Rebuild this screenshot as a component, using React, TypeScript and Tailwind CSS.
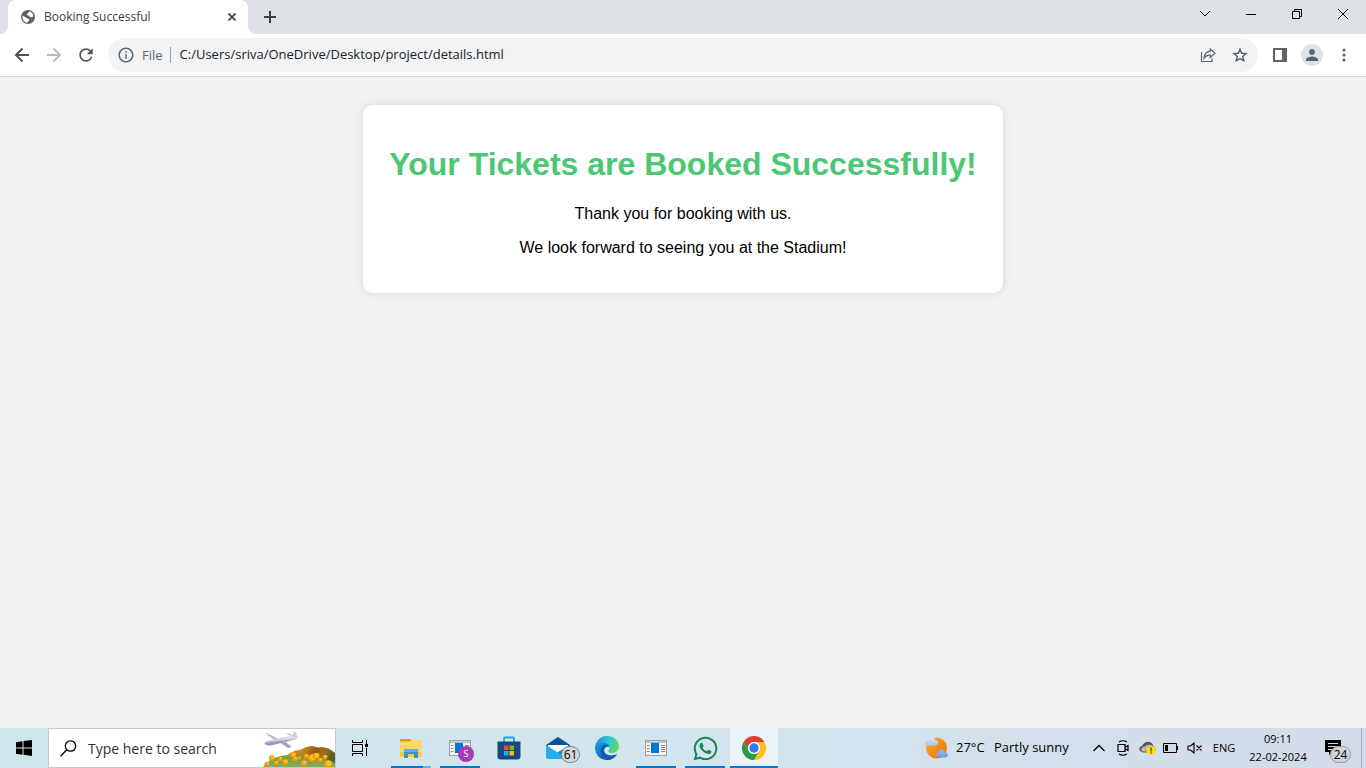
import React from "react";
import { FaWhatsapp } from "react-icons/fa";
import { MdInfoOutline, MdPerson, MdRefresh } from "react-icons/md";

type SlotProps = {
  label: string;
  children: React.ReactNode;
  running?: boolean;
  active?: boolean;
  grouped?: boolean;
};

function GlobeIcon() {
  return (
    <svg viewBox="0 0 14 14" className="size-3.5" aria-hidden="true">
      <circle cx="7" cy="7" r="7" fill="#5f6368" />
      <path fill="#fff" d="M8.500 1.600c-1 .3-1.300 1-1 1.700-1 0-2 .5-1.700 1.400.2.800 1.400.6 2 .9.800.4.500 1.200 1.300 1.500 1 .4 1.800-.7 3.300-.4a5.600 5.600 0 0 0-3.900-5.100zM1.500 6c-.5 3 1.200 5.700 3.800 6.500l1.500.2c-.5-1 .2-1.500 1-2 .7-.5.4-1.500-.3-1.900-.8-.4-1.700-.1-2.300-.8C4.500 7.200 3.300 6 1.500 6z" />
    </svg>
  );
}

function TabStrip() {
  return (
    <header className="flex h-[34px] items-stretch bg-[#dee1e6] text-[#3c4043]">
      <div className="flex w-2 bg-white">
        <span className="w-full rounded-br-lg bg-[#dee1e6]" />
      </div>
      <div className="flex w-60 items-center rounded-t-lg bg-white pr-2 pl-[13px]">
        <GlobeIcon />
        <span className="ml-[9px] flex-1 text-[12px] whitespace-nowrap">Booking Successful</span>
        <button aria-label="Close tab" className="flex size-4 items-center justify-center">
          <svg viewBox="0 0 8 8" className="size-2" stroke="#3c4043" strokeWidth="1.700">
            <path d="M.5 .5l7 7M7.500 .5l-7 7" />
          </svg>
        </button>
      </div>
      <div className="flex w-2 bg-white">
        <span className="w-full rounded-bl-lg bg-[#dee1e6]" />
      </div>
      <button aria-label="New tab" className="flex w-7 items-center justify-center">
        <svg viewBox="0 0 12 12" className="size-3" stroke="#3c4043" strokeWidth="2">
          <path d="M6 0v12M0 6h12" />
        </svg>
      </button>
      <div className="ml-auto flex h-7 text-black">
        <button aria-label="Search tabs" className="flex w-[46px] items-center justify-center">
          <svg viewBox="0 0 12 8" className="h-2 w-3" fill="none" stroke="currentColor">
            <path d="M1 1l5 5 5-5" />
          </svg>
        </button>
        <button aria-label="Minimize" className="flex w-[46px] items-center justify-center">
          <svg viewBox="0 0 10 10" className="size-2.5" stroke="currentColor">
            <path d="M0 5.500h10" />
          </svg>
        </button>
        <button aria-label="Restore" className="flex w-[46px] items-center justify-center">
          <svg viewBox="0 0 10 10" className="size-2.5" fill="none" stroke="currentColor">
            <path d="M.5 2.500h7v7h-7zM2.500 2.500v-2h7v7h-2" />
          </svg>
        </button>
        <button aria-label="Close window" className="flex w-[46px] items-center justify-center">
          <svg viewBox="0 0 10 10" className="size-2.5" stroke="currentColor">
            <path d="M0 0l10 10M10 0L0 10" />
          </svg>
        </button>
      </div>
    </header>
  );
}

function Toolbar() {
  return (
    <div className="flex h-[43px] items-center border-b border-[#d5d7da] bg-white pr-1.5 pl-1.5 text-[#5f6368]">
      <button aria-label="Back" className="flex w-8 justify-center">
        <svg viewBox="0 0 16 16" className="size-4" fill="none" stroke="#4f5357" strokeWidth="2">
          <path d="M15 8H2.500M8.500 1.500L2 8l6.500 6.500" />
        </svg>
      </button>
      <button aria-label="Forward" className="flex w-8 justify-center">
        <svg viewBox="0 0 16 16" className="size-4" fill="none" stroke="#babcbe" strokeWidth="2">
          <path d="M1 8h12.500M7.500 1.500L14 8l-6.500 6.500" />
        </svg>
      </button>
      <button aria-label="Reload" className="flex w-8 justify-center text-[#4f5357]">
        <MdRefresh className="size-5" />
      </button>
      <div className="ml-1.5 flex h-[34px] flex-1 items-center rounded-full bg-[#f1f3f4] pr-2.5 pl-[9px] text-[13px]">
        <MdInfoOutline className="size-[18px] shrink-0" />
        <span className="ml-[7px] border-r border-[#9aa0a6] pr-[7px] leading-4">File</span>
        <input
          aria-label="Address"
          defaultValue="C:/Users/sriva/OneDrive/Desktop/project/details.html"
          className="ml-[9px] min-w-0 flex-1 bg-transparent text-[#202124] outline-none"
        />
        <button aria-label="Share" className="mr-4">
          <svg viewBox="0 0 16 16" className="size-4" fill="none" stroke="currentColor" strokeWidth="1.200">
            <path d="M1.500 5v9.500h10.500V11.500M10.300 2L15 6.200l-4.700 4.200V8.200C7.500 8 5.500 9 4 11.200 4.300 7.500 6.500 4.700 10.300 4.200z" />
          </svg>
        </button>
        <button aria-label="Bookmark this page">
          <svg viewBox="0 0 16 16" className="size-4" fill="none" stroke="currentColor" strokeWidth="1.500">
            <path d="M8 2.300l1.700 4 4.300.4-3.300 2.800 1 4.200L8 11.500l-3.700 2.200 1-4.200L2 6.700l4.300-.4z" />
          </svg>
        </button>
      </div>
      <button aria-label="Side panel" className="ml-1.5 flex w-8 justify-center">
        <svg viewBox="0 0 14 14" className="size-3.5">
          <path fill="currentColor" fillRule="evenodd" d="M0 0h14v14H0zM2 2v10h7V2z" />
        </svg>
      </button>
      <button aria-label="Profile" className="ml-[5px] flex size-[22px] items-center justify-center rounded-full bg-[#dee1e6] text-[#56617a]">
        <MdPerson className="size-[18px]" />
      </button>
      <button aria-label="Menu" className="ml-[5px] flex w-8 justify-center">
        <svg viewBox="0 0 4 14" className="h-3.5 w-1" fill="currentColor">
          <circle cx="2" cy="2" r="1.600" />
          <circle cx="2" cy="7" r="1.600" />
          <circle cx="2" cy="12" r="1.600" />
        </svg>
      </button>
    </div>
  );
}

function SearchScene() {
  const flowers = [
    [4, 35, 2.5], [9, 29, 3], [17, 30, 2.5], [13, 34, 2.5], [22, 33, 3], [30, 26, 3], [32, 30, 2.5], [36, 29, 2],
    [41, 34, 3], [43, 27, 2.5], [49, 29, 4], [53, 27, 3.5], [57, 31, 2.5], [65, 35, 4], [62, 28, 2.5],
  ];
  return (
    <svg viewBox="0 0 72 38" className="h-[38px] w-[72px] shrink-0" aria-hidden="true">
      <defs>
        <linearGradient id="hill" x2="1" y2=".3">
          <stop stopColor="#e0952b" />
          <stop offset=".45" stopColor="#c77a1c" />
          <stop offset=".6" stopColor="#8f5a17" />
          <stop offset=".8" stopColor="#a56a1c" />
          <stop offset="1" stopColor="#54602a" />
        </linearGradient>
        <linearGradient id="meadow" x2="0" y2="1">
          <stop stopColor="#7d9a3c" />
          <stop offset="1" stopColor="#86ad5a" />
        </linearGradient>
        <linearGradient id="plane" x2="0" y2="1">
          <stop stopColor="#efebf6" />
          <stop offset="1" stopColor="#b3aacf" />
        </linearGradient>
      </defs>
      <path fill="url(#hill)" d="M22 27c6-3 9-6 15-6 4-2 8-4 12-4 4 1 6 2 9 1 5 0 10 2 14 6v14H22z" />
      <path fill="url(#meadow)" d="M0 38c5-8 16-12 29-12 17 0 31 2 43 8v4z" />
      {flowers.map(([x, y, r], i) => (
        <g key={i}>
          <ellipse cx={x} cy={y} rx={r} ry={r - 0.3} fill="#f79a08" />
          <circle cx={x + 0.8} cy={y - 0.8} r={r - 1.2} fill="#ffc31a" />
        </g>
      ))}
      <path fill="#c3bcda" d="M2 4c5 1 11 4 17 8l-5 1C10 10 5 7 2 4z" />
      <path fill="#a79fc8" d="M16 13l5-1 8 6-4 1z" />
      <path fill="url(#plane)" d="M2 13l2-1 21-5c4-1 7-1 9 0 2 1 1 3-2 4L9 16c-4 1-9 0-7-3z" />
      <path fill="#cfc9e2" d="M29 8l2-5 2 0 1 5zM28 7l-5-2 3-1 5 3z" />
      <path fill="#9087b8" d="M2 14l30-4-22 6c-4 1-7 0-8-2z" opacity=".7" />
    </svg>
  );
}

function Slot({ label, children, running, active, grouped }: SlotProps) {
  const lit = active ? "w-full bg-[#0078d7]" : running ? "w-10 bg-[#0078d7]" : "w-10";
  return (
    <button aria-label={label} className={active ? "flex w-12 flex-col items-center bg-[#ecf3f8]" : "flex w-12 flex-col items-center"}>
      <span className="flex h-[38px] items-center justify-center pt-0.5">{children}</span>
      <span className={`flex h-0.5 justify-end ${lit}`}>
        {grouped && <span className="w-2 bg-[#62aee6]" />}
      </span>
    </button>
  );
}

function WindowIcon() {
  return (
    <svg viewBox="0 0 22 18" className="h-[18px] w-[22px]">
      <path fill="#9b9d9f" d="M0 1h22v16H0z" />
      <path fill="#f4f4f4" d="M1 4h20v12H1z" />
      <path fill="#d1d1d1" d="M1 2h20v1.500H1z" />
      <path fill="#0078d7" d="M6 4h8v10H6z" />
      <path stroke="#8a8a8a" d="M2 6.500h2.500M2 9.500h2.500M2 12.500h2.500M16 6.500h4M16 8.500h4M16 10.500h4M16 12.500h4" />
    </svg>
  );
}

function FolderIcon() {
  return (
    <svg viewBox="0 0 22 20" className="h-5 w-[22px]">
      <path fill="#dd9a08" d="M0 1.500q0-.5 1-.5h9l2 2.500H0z" />
      <path fill="#ffd667" d="M0 4h10l2-2h9.500v17H0z" />
      <path fill="#fbc94a" d="M0 14h21.500v5H0z" />
      <path fill="#3c8fd0" d="M4 12q0-1 1-1h12q1 0 1 1v8h-4v-4H8v4H4z" />
      <path fill="#62aee0" d="M4 12q0-1 1-1h12q1 0 1 1v2H4z" />
    </svg>
  );
}

function StoreIcon() {
  return (
    <svg viewBox="0 0 24 24" className="size-6">
      <path fill="none" stroke="#1fa6e2" strokeWidth="1.800" d="M7 6V2.500q0-1 1-1h8q1 0 1 1V6" />
      <path fill="#174a80" d="M.5 5.500h23v15q0 3-3 3h-17q-3 0-3-3z" />
      <path fill="#f25022" d="M7 9.500h4.500V14H7z" />
      <path fill="#7fba00" d="M12.500 9.500H17V14h-4.500z" />
      <path fill="#29a9ea" d="M7 15h4.500v4.500H7z" />
      <path fill="#ffb900" d="M12.500 15H17v4.500h-4.500z" />
    </svg>
  );
}

function MailIcon() {
  return (
    <svg viewBox="0 0 24 22" className="h-[22px] w-6">
      <path fill="#0b4f9b" d="M0 8L12 0l12 8v6H0z" />
      <path fill="#fff" d="M2 8h20v4l-10 6L2 12z" />
      <path fill="#1382d2" d="M24 8v12q0 2-2 2H8l4-7z" />
      <path fill="#25ade9" d="M0 8l22 14H2q-2 0-2-2z" />
    </svg>
  );
}

function EdgeIcon() {
  return (
    <svg viewBox="0 0 24 24" className="size-6">
      <defs>
        <linearGradient id="edgeTop" y1=".3" x2="1" y2=".6">
          <stop stopColor="#1590d5" />
          <stop offset=".5" stopColor="#2fc5d4" />
          <stop offset="1" stopColor="#66dc54" />
        </linearGradient>
        <linearGradient id="edgeLow" x2="1" y2="1">
          <stop stopColor="#179de4" />
          <stop offset="1" stopColor="#0b4b91" />
        </linearGradient>
      </defs>
      <path fill="url(#edgeLow)" d="M0 11.500C0 8 4 6 8 6c4 0 7 2 7 5-4-1-6 1-6 4 0 5 7 7 13 3-2 4-6 6-10 6C5 24 0 18.500 0 11.500z" />
      <path fill="#115ba6" d="M9 9c-3 2-4 5-3 8 1 4 4 7 8 7 3-1 6-3 8-6-6 3-13 1-13-4 0-2 2-4 5-4z" />
      <path fill="url(#edgeTop)" d="M0 11C1 4.500 6 0 12 0c7 0 12 5 12 10.500 0 4-3 6.500-7 6.500-3 0-4.500-1-3.500-2.500 3-5-1-8-5.500-8C4 6.500 1 8.500 0 11z" />
    </svg>
  );
}

function ChromeIcon() {
  return (
    <svg viewBox="0 0 24 24" className="size-6">
      <path fill="#df3d2f" d="M1.600 6A12 12 0 0 1 22.400 6H12a6 6 0 0 0-5.200 9z" />
      <path fill="#fbc116" d="M22.400 6A12 12 0 0 1 12 24l5.200-9A6 6 0 0 0 12 6z" />
      <path fill="#249b4a" d="M12 24A12 12 0 0 1 1.600 6l5.200 9a6 6 0 0 0 10.400 0z" />
      <circle cx="12" cy="12" r="6" fill="#fff" />
      <circle cx="12" cy="12" r="4.700" fill="#3478e6" />
    </svg>
  );
}

function WeatherIcon() {
  return (
    <svg viewBox="0 0 24 24" className="size-6">
      <defs>
        <linearGradient id="sun" x2="1" y2="1">
          <stop stopColor="#ffae23" />
          <stop offset="1" stopColor="#e96d10" />
        </linearGradient>
        <linearGradient id="cloud" x2="0" y2="1">
          <stop stopColor="#dbe6fd" />
          <stop offset="1" stopColor="#7299dc" />
        </linearGradient>
      </defs>
      <circle cx="12.500" cy="12" r="10.500" fill="url(#sun)" />
      <path fill="url(#cloud)" d="M2.500 9.500a2.600 2.600 0 0 1 0-5C4-.8 10-.8 11 4c4 0 4 5.500 0 5.500zM14 21.500a2.600 2.600 0 0 1 0-5c1-4.500 6-4.500 7 0 4 0 4 5 0 5z" />
    </svg>
  );
}

function TrayIcons() {
  return (
    <div className="flex items-center text-black">
      <button aria-label="Show hidden icons" className="flex w-6 justify-center">
        <svg viewBox="0 0 12 8" className="h-2 w-3" fill="none" stroke="currentColor" strokeWidth="1.300">
          <path d="M.5 7L6 1.500 11.500 7" />
        </svg>
      </button>
      <button aria-label="Meet now" className="flex w-6 justify-center">
        <svg viewBox="0 0 12 16" className="h-4 w-3" fill="none" stroke="currentColor" strokeWidth="1.200">
          <path d="M1 4.500h7v7H1zM8 7.200l3-1.700v5L8 8.800M2 2q4-2.500 8 0M2 14q4 2.500 8 0" />
        </svg>
      </button>
      <button aria-label="OneDrive" className="flex w-6 justify-center">
        <svg viewBox="0 0 17 14" className="h-3.5 w-[17px]">
          <path fill="#555" d="M3 11C-1 10 0 5 3 5c2-5 9-6 11-1z" />
          <path fill="#b9babb" stroke="#55585a" d="M4 11C0 10 2 5 6 5c3-3 8-2 9 2 2 1 1 4-1 4z" />
          <circle cx="12" cy="9.500" r="4.500" fill="#ffe000" />
          <path stroke="#333" strokeWidth="1.200" d="M12 6.500v4M12 11.300v1.200" />
        </svg>
      </button>
      <button aria-label="Battery" className="flex w-6 justify-center">
        <svg viewBox="0 0 16 10" className="h-2.5 w-4">
          <path fill="none" stroke="currentColor" d="M.5 .5h13v9H.5z" />
          <path fill="currentColor" d="M2 2h3v6H2zM14 3h1v4h-1z" />
        </svg>
      </button>
      <button aria-label="Volume muted" className="flex w-6 justify-center">
        <svg viewBox="0 0 16 12" className="h-3 w-4" fill="none" stroke="currentColor" strokeWidth="1.100">
          <path d="M1 4h2.500L7 1v10L3.500 8H1zM9.500 3.500l5 5M14.500 3.500l-5 5" />
        </svg>
      </button>
    </div>
  );
}

function Taskbar() {
  return (
    <footer className="flex h-10 items-stretch bg-linear-to-r from-[#cde6ec] via-[#d3e5ee] to-[#d3dbe8] text-black">
      <button aria-label="Start" className="flex w-12 items-center justify-center">
        <svg viewBox="0 0 16 16" className="size-4">
          <path d="M0 2.300L6.500 1.300V7.500H0zM7.500 1.100L16 0v7.500H7.500zM0 8.500h6.500v6.300L0 13.800zM7.500 8.500H16V16l-8.500-1.200z" />
        </svg>
      </button>
      <label className="flex w-72 items-center border border-[#c5c8ca] bg-white pl-[11px]">
        <svg viewBox="0 0 17 17" className="size-[17px] shrink-0" fill="none" stroke="currentColor" strokeWidth="1.300">
          <circle cx="10.500" cy="6" r="5.200" />
          <path d="M6.800 9.800L.5 16.200" />
        </svg>
        <input
          aria-label="Type here to search"
          placeholder="Type here to search"
          className="ml-[11px] min-w-0 flex-1 bg-transparent text-[14px] outline-none placeholder:text-[#333]"
        />
        <SearchScene />
      </label>
      <div className="mr-[3px]">
        <button aria-label="Task view" className="flex h-full w-12 items-center justify-center">
          <svg viewBox="0 0 16 16" className="size-4" fill="none" stroke="currentColor">
            <path d="M.5 0v2.500h10V0M.5 16v-2.500h10V16M.5 4.500h10v7H.5zM14.500 0v4M14.500 8v8" />
            <path fill="currentColor" stroke="none" d="M13 4h3v3h-3z" />
          </svg>
        </button>
      </div>
      <nav aria-label="Taskbar apps" className="flex gap-px">
        <Slot label="File Explorer" running grouped><FolderIcon /></Slot>
        <Slot label="Window" running>
          <span className="relative flex">
            <WindowIcon />
            <span className="absolute top-[7px] left-[9px] flex size-4 items-center justify-center rounded-full bg-[#a93bb8] text-[9px] text-white">S</span>
          </span>
        </Slot>
        <Slot label="Microsoft Store"><StoreIcon /></Slot>
        <Slot label="Mail">
          <span className="relative flex">
            <MailIcon />
            <span className="absolute top-[9px] left-[15px] flex h-[17px] w-[19px] items-center justify-center rounded-full border border-[#808488] bg-[#d5d8da] text-[12px] font-medium">61</span>
          </span>
        </Slot>
        <Slot label="Microsoft Edge"><EdgeIcon /></Slot>
        <Slot label="Application" running><WindowIcon /></Slot>
        <Slot label="WhatsApp" running><FaWhatsapp className="size-[27px] text-[#168551]" /></Slot>
        <Slot label="Google Chrome" running active><ChromeIcon /></Slot>
      </nav>
      <div className="ml-auto flex items-center">
        <button className="mr-[18px] flex items-center text-[13px] whitespace-nowrap">
          <WeatherIcon />
          <span className="ml-2 w-[38px] text-left">27°C</span>
          <span className="w-[75px] text-left">Partly sunny</span>
        </button>
        <TrayIcons />
        <button className="ml-[5px] w-6 text-center text-[11px]">ENG</button>
        <button className="ml-2.5 flex w-16 flex-col items-center text-[11px] leading-[18px] whitespace-nowrap">
          <span>09:11</span>
          <span>22-02-2024</span>
        </button>
        <button aria-label="24 new notifications" className="relative ml-[15px] flex h-full w-[37px] items-center border-r border-[#a8b2bf]">
          <svg viewBox="0 0 16 16" className="size-4">
            <path d="M0 0h16v12h-9l-3 3v-3H0z" />
            <path stroke="#d3dbe8" d="M3 3.500h10M3 6.500h10M3 9.500h7" />
          </svg>
          <span className="absolute top-[18px] left-[5px] flex h-[17px] w-[21px] items-center justify-center rounded-full border border-[#909498] bg-[#d2d5d9] text-[12px] font-medium">24</span>
        </button>
        <span className="w-1" />
      </div>
    </footer>
  );
}

export default function App() {
  return (
    <div className="flex min-h-screen flex-col bg-[#f1f1f1] font-['Open_Sans','Noto_Sans',sans-serif]">
      <TabStrip />
      <Toolbar />
      <main className="flex-1 px-4 pt-7 font-['Liberation_Sans',Arial,sans-serif] text-black">
        <section className="mx-auto max-w-[640px] rounded-[10px] bg-white px-5 pt-10 pb-9 text-center shadow-[0_0_10px_rgba(0,0,0,0.1)]">
          <h1 className="text-[32px] leading-[38px] font-bold text-[#4cc774]">Your Tickets are Booked Successfully!</h1>
          <p className="mt-[22px] text-base leading-[18px]">Thank you for booking with us.</p>
          <p className="mt-4 text-base leading-[18px]">We look forward to seeing you at the Stadium!</p>
        </section>
      </main>
      <Taskbar />
    </div>
  );
}
